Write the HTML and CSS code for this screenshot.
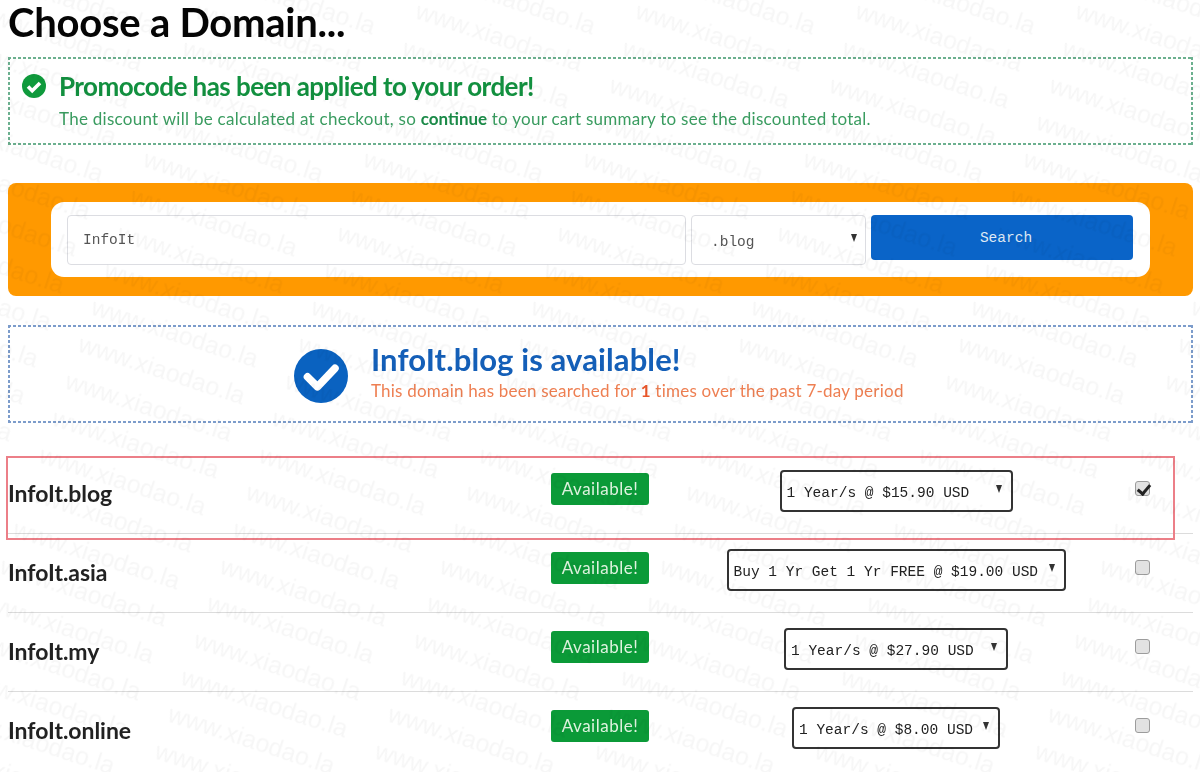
FILE: index.html
```html
<!DOCTYPE html>
<html lang="en">
<head>
<meta charset="utf-8">
<title>Choose a Domain</title>
<link rel="stylesheet" href="styles.css">
</head>
<body>
<main class="page">
  <h1 class="title">Choose a Domain...</h1>

  <section class="promo">
    <svg class="promo-icon" viewBox="0 0 24 24" aria-hidden="true">
      <circle cx="12" cy="12" r="12" fill="#0f9a3c"/>
      <path d="M6 12.6l4.2 4.2L18 9" fill="none" stroke="#fff" stroke-width="3.6"/>
    </svg>
    <div class="promo-body">
      <h2 class="promo-title">Promocode has been applied to your order!</h2>
      <p class="promo-text">The discount will be calculated at checkout, so <strong>continue</strong> to your cart summary to see the discounted total.</p>
    </div>
  </section>

  <section class="search">
    <form class="search-form">
      <input class="search-input" type="text" value="InfoIt">
      <div class="picker picker-tld">
        <select class="select-tld"><option>.blog</option></select>
      </div>
      <button class="search-button" type="button">Search</button>
    </form>
  </section>

  <section class="result">
    <svg class="result-icon" viewBox="0 0 24 24" aria-hidden="true">
      <circle cx="12" cy="12" r="12" fill="#0a62c0"/>
      <path d="M6 12.4l4.4 4.4L18.2 8.6" fill="none" stroke="#fff" stroke-width="3.4" stroke-linejoin="round" stroke-linecap="round"/>
    </svg>
    <div>
      <h2 class="result-title">InfoIt.blog is available!</h2>
      <p class="result-text">This domain has been searched for <strong>1</strong> times over the past 7-day period</p>
    </div>
  </section>

  <section class="domains">
    <div class="domain domain-selected">
      <span class="domain-name">InfoIt.blog</span>
      <span class="badge">Available!</span>
      <div class="term"><div class="picker"><select class="term-select term-a"><option>1 Year/s @ $15.90 USD</option></select></div></div>
      <input class="check" type="checkbox" checked>
    </div>
    <div class="domain">
      <span class="domain-name">InfoIt.asia</span>
      <span class="badge">Available!</span>
      <div class="term"><div class="picker"><select class="term-select term-b"><option>Buy 1 Yr Get 1 Yr FREE @ $19.00 USD</option></select></div></div>
      <input class="check" type="checkbox">
    </div>
    <div class="domain">
      <span class="domain-name">InfoIt.my</span>
      <span class="badge">Available!</span>
      <div class="term"><div class="picker"><select class="term-select term-c"><option>1 Year/s @ $27.90 USD</option></select></div></div>
      <input class="check" type="checkbox">
    </div>
    <div class="domain domain-last">
      <span class="domain-name">InfoIt.online</span>
      <span class="badge">Available!</span>
      <div class="term"><div class="picker"><select class="term-select term-d"><option>1 Year/s @ $8.00 USD</option></select></div></div>
      <input class="check" type="checkbox">
    </div>
  </section>
</main>

<svg class="watermark" aria-hidden="true">
  <defs>
    <pattern id="wm" width="220" height="37" patternUnits="userSpaceOnUse" patternTransform="translate(634 18) skewX(-19.4)">
      <g class="wm-text">
        <text transform="translate(0 0) skewX(19.4) rotate(18)">www.xiaodao.la</text>
        <text transform="translate(-220 0) skewX(19.4) rotate(18)">www.xiaodao.la</text>
        <text transform="translate(0 -37) skewX(19.4) rotate(18)">www.xiaodao.la</text>
        <text transform="translate(-220 -37) skewX(19.4) rotate(18)">www.xiaodao.la</text>
        <text transform="translate(0 -74) skewX(19.4) rotate(18)">www.xiaodao.la</text>
        <text transform="translate(-220 -74) skewX(19.4) rotate(18)">www.xiaodao.la</text>
        <text transform="translate(0 37) skewX(19.4) rotate(18)">www.xiaodao.la</text>
        <text transform="translate(-220 37) skewX(19.4) rotate(18)">www.xiaodao.la</text>
      </g>
    </pattern>
  </defs>
  <rect class="wm-fill" width="100%" height="100%"/>
</svg>
</body>
</html>
```
FILE: styles.css
```css
* { box-sizing: border-box; }
html, body { margin: 0; height: 772px; overflow: hidden; background: #fff; }
body { position: relative; font-family: Lato, "Noto Sans", sans-serif; color: #222; }

.page { height: 772px; padding: 0 7px 0 8px; filter: blur(0.4px); }

.title { margin: 0; height: 57px; font-size: 40px; line-height: 44px; font-weight: 700; letter-spacing: -0.25px; color: #050505; }

.promo, .result {
  background:
    repeating-linear-gradient(90deg, var(--dash) 0 3px, transparent 3px 5px) left top / 100% 2px no-repeat,
    repeating-linear-gradient(90deg, var(--dash) 0 3px, transparent 3px 5px) left bottom / 100% 2px no-repeat,
    repeating-linear-gradient(180deg, var(--dash) 0 3px, transparent 3px 5px) left top / 2px 100% no-repeat,
    repeating-linear-gradient(180deg, var(--dash) 0 3px, transparent 3px 5px) right top / 2px 100% no-repeat;
}
.promo {
  --dash: #6cb08f;
  display: flex; gap: 13px; height: 88px; padding: 16px 14px;
  color: #3a9c60;
}
.promo-icon { width: 24px; height: 24px; flex: none; margin-top: 1px; }
.promo-title { margin: -2px 0 0; font-size: 26px; line-height: 30px; font-weight: 700; letter-spacing: -0.55px; color: #12903f; }
.promo-text { margin: 8px 0 0; font-size: 17px; line-height: 20px; letter-spacing: 0.27px; }
.promo-text strong { color: #1b8a48; letter-spacing: 0; }

.search { margin-top: 38px; height: 113px; padding: 19px 43px; background: #ff9900; border-radius: 8px; }
.search-form {
  display: flex; align-items: flex-start; gap: 5px; height: 75px;
  padding: 13px 16px; background: #fff; border-radius: 13px;
}
.search-input, .select-tld, .search-button, .term-select {
  font-family: "Liberation Mono", "DejaVu Sans Mono", monospace;
  font-size: 14.5px;
}
.search-input {
  width: 619px; height: 50px; padding: 0 15px;
  border: 1px solid #dcdde2; border-radius: 4px; color: #555; background: #fff;
}
.picker { position: relative; }
.picker::after {
  content: ""; position: absolute; top: 50%; right: 9px; margin-top: -6px;
  border-left: 3.5px solid transparent; border-right: 3.5px solid transparent;
  border-top: 8px solid #333;
}
.select-tld {
  display: block; width: 175px; height: 50px; padding: 3px 19px 0;
  appearance: none; background: #fff; color: #555;
  border: 1px solid #dcdde2; border-radius: 4px;
}
.search-button {
  width: 262px; height: 45px; padding: 0 0 0 8px;
  border: 0; border-radius: 4px; background: #0a64c8; color: #dfe9f5;
}

.result {
  --dash: #7c9ccb;
  display: flex; align-items: center; justify-content: flex-start; gap: 23px;
  margin-top: 29px; height: 98px; padding: 0 0 0 286px;
}
.result-icon { width: 54px; height: 54px; flex: none; margin-top: 3px; }
.result-title { margin: -6px 0 4px; font-size: 31px; line-height: 36px; font-weight: 700; letter-spacing: 0.12px; color: #145fb8; }
.result-text { margin: 0; font-size: 17px; line-height: 20px; letter-spacing: 0.22px; color: #ee7f52; }
.result-text strong { color: #e8562a; }

.domains { margin-top: 32px; }
.domain {
  position: relative; display: grid; align-items: start;
  grid-template-columns: 543px 98px 484px 20px 1fr;
  height: 79px; padding-top: 15px;
  border-bottom: 1px solid #dcdcdc;
}
.domain-last { border-bottom: 0; }
.domain-selected::after {
  content: ""; position: absolute; left: -2px; right: 18px; top: 1px; bottom: -7px;
  border: 2px solid #ec7f88;
}
.domain-name { margin-top: 8px; font-size: 23px; line-height: 30px; font-weight: 700; letter-spacing: -0.05px; color: #222; }
.badge {
  margin-top: 3px; height: 32px; line-height: 31px; text-align: center; letter-spacing: 0.5px;
  background: #0b9a38; color: #dff3df; border-radius: 3px; font-size: 17px;
}
.term { display: flex; justify-content: center; padding-left: 10px; }
.term .picker::after { right: 11px; }
.term-select {
  display: block; height: 42px; padding: 3px 0 0 5px;
  appearance: none; background: #fff; color: #222;
  border: 2px solid #333; border-radius: 4px;
}
.term-a { width: 233px; }
.term-b { width: 339px; }
.term-c { width: 224px; }
.term-d { width: 208px; }

.check {
  appearance: none; width: 15px; height: 15px; margin: 11px 0 0 2px; position: relative;
  background: #e2e2e2; border: 1px solid #9c9c9c; border-radius: 3px;
}
.check:checked::before {
  content: ""; position: absolute; left: 4px; top: 0; width: 5px; height: 10px;
  border: solid #222; border-width: 0 3px 3px 0; transform: rotate(40deg);
}

.watermark { position: absolute; left: 0; top: 0; width: 1200px; height: 772px; pointer-events: none; }
.wm-text { font-family: "Liberation Sans", sans-serif; font-size: 25px; fill: #000; }
.wm-fill { fill: url(#wm); opacity: 0.035; }
```
